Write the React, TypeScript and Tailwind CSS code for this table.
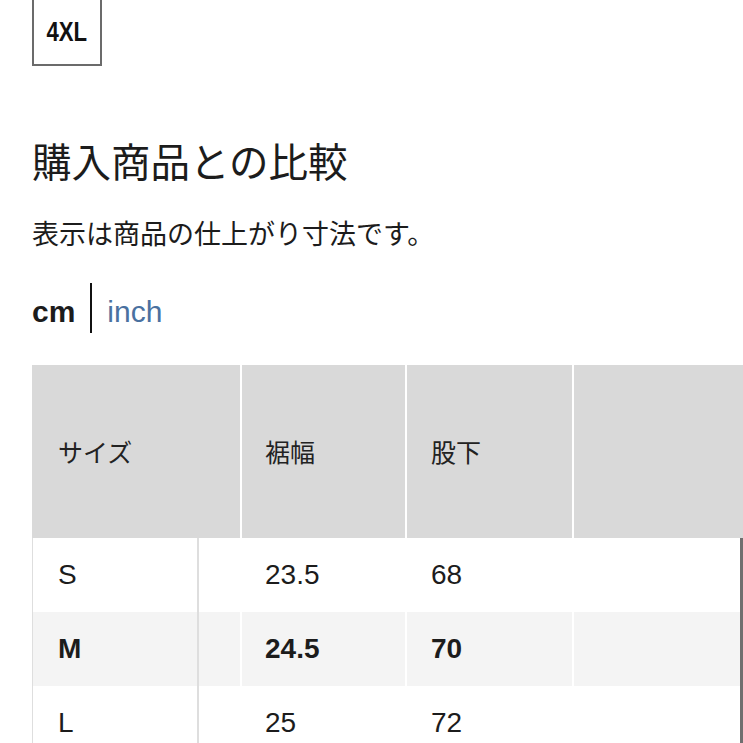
import React from "react";

const cjk = { fontFamily: '"Noto Sans CJK JP", "Liberation Sans", sans-serif' };
const latin = { fontFamily: '"Liberation Sans", "Noto Sans CJK JP", sans-serif' };

// size rows shown in the comparison table
const rows = [
  { size: "S", hem: "23.5", inseam: "68", current: false },
  { size: "M", hem: "24.5", inseam: "70", current: true },
  { size: "L", hem: "25", inseam: "72", current: false },
];

export default function App() {
  return (
    <div className="w-[743px] h-[743px] overflow-hidden bg-white pl-[32px] text-[#1c1c1c]">
      <SizeChip label="4XL" />

      <h2 className="mt-[74px] text-[39.5px] leading-[39px] font-normal" style={cjk}>
        購入商品との比較
      </h2>
      <p className="mt-[40px] text-[27px] leading-[27px]" style={cjk}>
        表示は商品の仕上がり寸法です。
      </p>

      <div className="mt-[37px] flex h-[50px] items-center gap-[15px]" style={latin}>
        <span className="pt-[7px] text-[30px] leading-[30px] font-bold">cm</span>
        <span className="h-[50px] w-[2px] bg-[#111]" />
        <span className="pt-[7px] text-[30px] leading-[30px] text-[#4a71a0]">inch</span>
      </div>

      <SizeTable />
    </div>
  );
}

function SizeChip({ label }: { label: string }) {
  return (
    <div className="flex h-[66px] w-[70px] items-center justify-center border-2 border-t-0 border-[#6b6b6b]">
      <span className="scale-x-[0.82] text-[27px] leading-[27px] font-bold text-[#111]" style={latin}>
        {label}
      </span>
    </div>
  );
}

function SizeTable() {
  return (
    <div className="mt-[32px]">
      <div className="flex h-[173px] gap-[2px] bg-white text-[25px] leading-[25px] text-[#222]" style={cjk}>
        <div className="flex w-[208px] items-center bg-[#d9d9d9] pl-[26px]">サイズ</div>
        <div className="flex w-[163px] items-center bg-[#d9d9d9] pl-[23px]">裾幅</div>
        <div className="flex w-[165px] items-center bg-[#d9d9d9] pl-[24px]">股下</div>
        <div className="flex-1 bg-[#d9d9d9]" />
      </div>

      {rows.map((r) => (
        <div
          key={r.size}
          className={`flex h-[74px] gap-[2px] border-r-[3px] border-[#6f6f6f] text-[28px] leading-[28px] ${
            r.current ? "font-bold" : "font-normal"
          }`}
          style={latin}
        >
          <div className={`flex w-[208px] ${r.current ? "bg-[#f4f4f4]" : "bg-white"}`}>
            <div className="flex w-[167px] items-center border-l border-r-2 border-[#dedede] pl-[25px]">
              {r.size}
            </div>
          </div>
          <div className={`flex w-[163px] items-center pl-[23px] ${r.current ? "bg-[#f4f4f4]" : "bg-white"}`}>
            {r.hem}
          </div>
          <div className={`flex w-[165px] items-center pl-[24px] ${r.current ? "bg-[#f4f4f4]" : "bg-white"}`}>
            {r.inseam}
          </div>
          <div className={`flex-1 ${r.current ? "bg-[#f4f4f4]" : "bg-white"}`} />
        </div>
      ))}
    </div>
  );
}
